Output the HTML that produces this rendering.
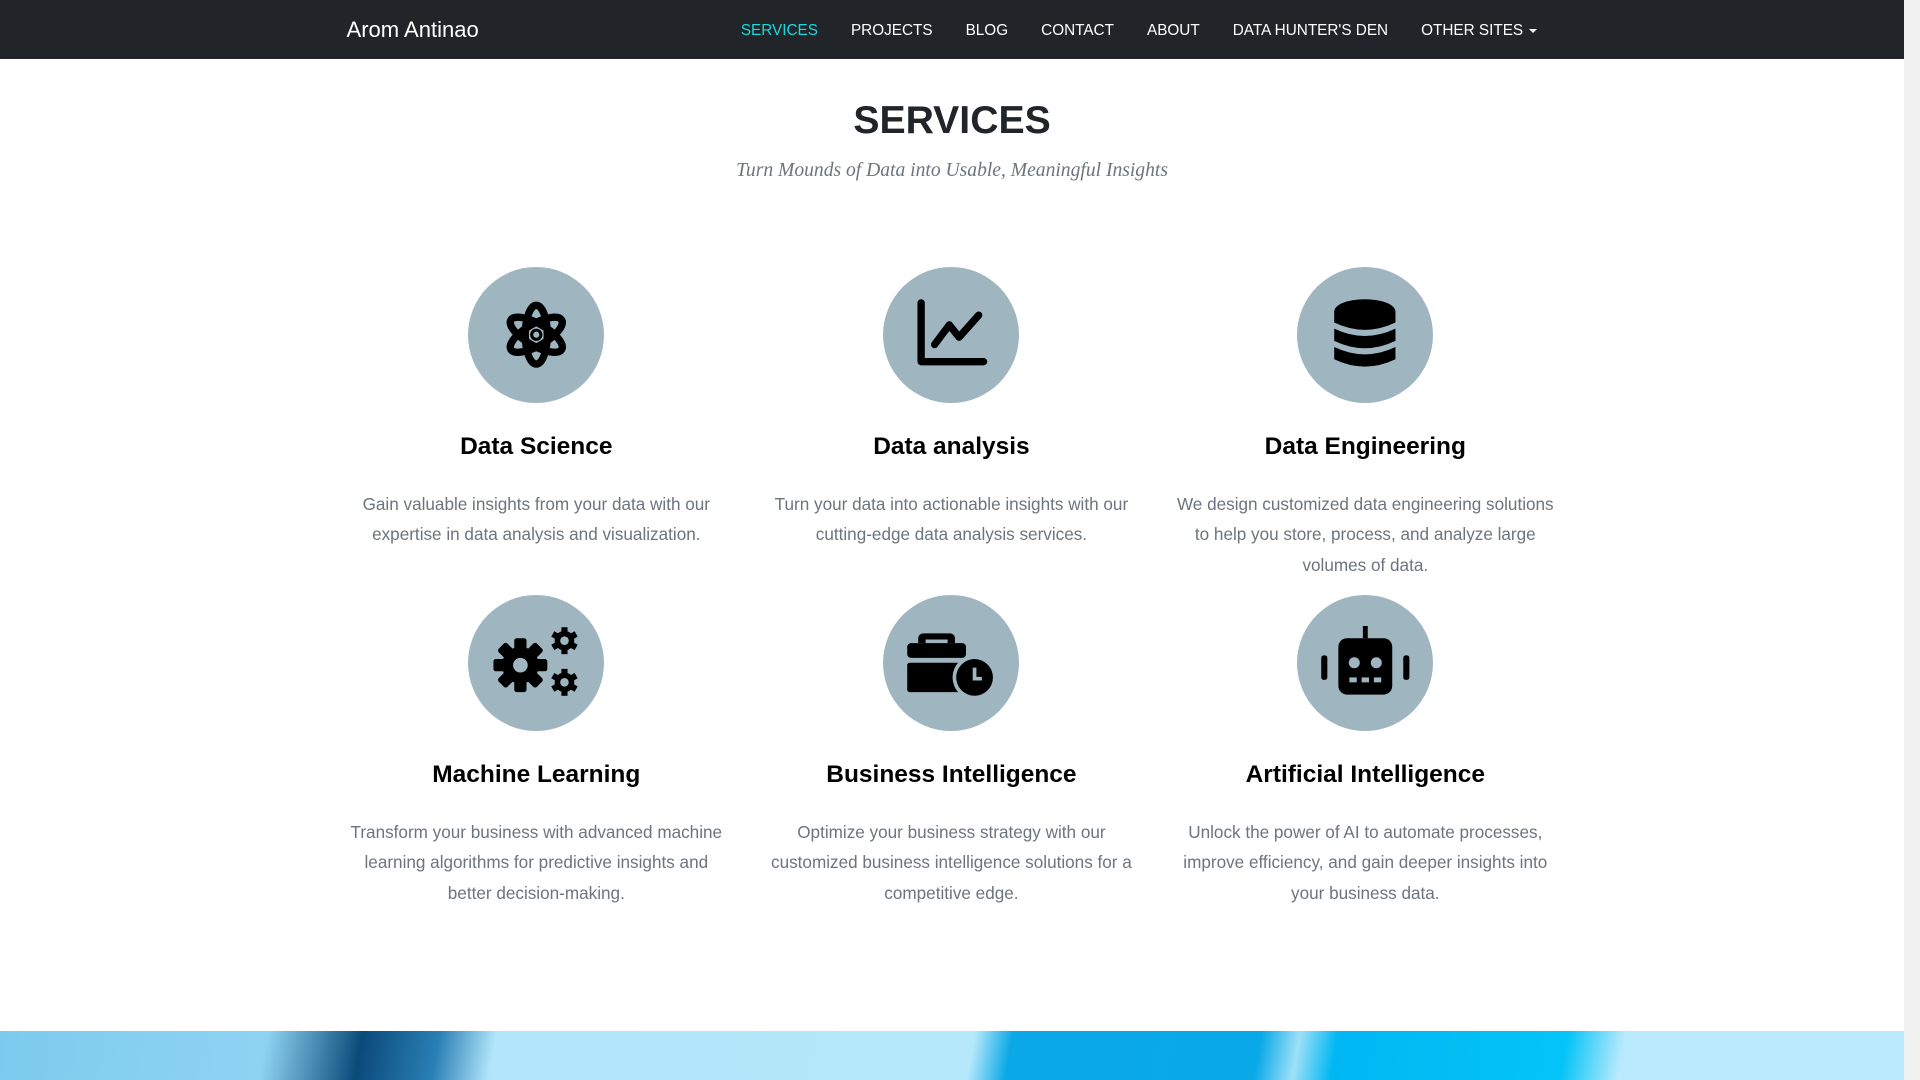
<!DOCTYPE html>
<html><head><meta charset="utf-8">
<style>
html,body{margin:0;padding:0;overflow:hidden}
body{width:1920px;height:1080px;position:relative;background:#fff}
#w{zoom:1.2244898;width:1568px;height:882px;position:relative;font-family:"Liberation Sans",sans-serif;overflow:hidden}
.nav{position:absolute;left:0;top:0;width:1555px;height:48px;background:#212529}
.brand{position:absolute;left:283px;top:14px;color:#fff;font-size:18px}
.links{position:absolute;top:18px;left:605px;font-size:12.5px;color:#fff;white-space:nowrap}
.links span{margin-right:27px}
.links .a{color:#1ad8dc}
.caret{display:inline-block;border-top:4px solid #fff;border-left:3.5px solid transparent;border-right:3.5px solid transparent;vertical-align:middle;margin-left:5px}
h1{position:absolute;left:0;width:1555px;top:81px;margin:0;text-align:center;font-size:32px;font-weight:bold;color:#212529}
.sub{position:absolute;left:0;width:1555px;top:131px;text-align:center;font-family:"Liberation Serif",serif;font-style:italic;font-size:16px;color:#6c757d}
.col{position:absolute;width:310px;text-align:center}
.circ{width:111px;height:111px;border-radius:50%;background:#9fb6c1;margin:0 auto;display:flex;align-items:center;justify-content:center}
.col h3{margin:22px 0 0;font-size:20px;font-weight:bold;color:#000;line-height:28px}
.col p{margin:20px 0 0;font-size:14px;line-height:25px;color:#6c757d}
.sb{position:absolute;left:1555px;top:0;width:13px;height:882px;background:#f1f1f1}
.th{position:absolute;left:1557px;top:145px;width:10px;height:123px;background:#c1c1c1}
.band{position:absolute;left:0;top:842px;width:1555px;height:40px;background:linear-gradient(100deg,#7ccbee 0%,#8fd3f2 14%,#0a4a7a 19%,#2a7fb5 23%,#b3e6fb 26%,#b6e8fb 51%,#0aa8e6 53%,#09a9e8 66%,#9ee0f8 68%,#00b7f3 70%,#04c4f7 82%,#b8e9fc 85%,#b8e9fc 100%)}
</style></head><body><div id="w">
<div class="nav"><div class="brand">Arom Antinao</div>
<div class="links"><span class="a">SERVICES</span><span>PROJECTS</span><span>BLOG</span><span>CONTACT</span><span>ABOUT</span><span>DATA HUNTER'S DEN</span><span>OTHER SITES<i class="caret"></i></span></div></div>
<h1>SERVICES</h1>
<div class="sub">Turn Mounds of Data into Usable, Meaningful Insights</div>

<div class="col" style="left:283px;top:218px"><div class="circ"><svg width="56" height="60" viewBox="-28 -30 56 60"><g fill="none" stroke="#000" stroke-width="6"><ellipse rx="9" ry="24"/><ellipse rx="9" ry="24" transform="rotate(60)"/><ellipse rx="9" ry="24" transform="rotate(-60)"/></g><circle r="5" fill="#000"/><circle r="2.5" fill="#9fb6c1"/></svg></div><h3>Data Science</h3><p>Gain valuable insights from your data with our expertise in data analysis and visualization.</p></div>

<div class="col" style="left:622px;top:218px"><div class="circ"><svg width="60" height="60" viewBox="0 0 60 60"><path d="M5 4V52H56" fill="none" stroke="#000" stroke-width="6" stroke-linecap="round" stroke-linejoin="round"/><path d="M16 38L28 22L36 32L52 14" fill="none" stroke="#000" stroke-width="6" stroke-linecap="round" stroke-linejoin="round"/></svg></div><h3>Data analysis</h3><p>Turn your data into actionable insights with our cutting-edge data analysis services.</p></div>

<div class="col" style="left:960px;top:218px"><div class="circ"><svg width="52" height="60" viewBox="0 0 52 60"><ellipse cx="26" cy="11" rx="25" ry="10"/><path d="M1 11H51V20Q26 32 1 20Z"/><path d="M1 25Q26 37 51 25V35Q26 47 1 35Z"/><path d="M1 40Q26 52 51 40V50Q26 62 1 50Z"/></svg></div><h3>Data Engineering</h3><p>We design customized data engineering solutions to help you store, process, and analyze large volumes of data.</p></div>

<div class="col" style="left:283px;top:486px"><div class="circ"><svg width="74" height="60" viewBox="0 0 74 60"><g transform="translate(24,32)"><circle r="15" fill="#000"/><g fill="#000"><rect x="-5" y="-22" width="10" height="44" rx="2"/><rect x="-5" y="-22" width="10" height="44" rx="2" transform="rotate(45)"/><rect x="-5" y="-22" width="10" height="44" rx="2" transform="rotate(90)"/><rect x="-5" y="-22" width="10" height="44" rx="2" transform="rotate(135)"/></g><circle r="6" fill="#9fb6c1"/></g><g transform="translate(60,12)"><circle r="8" fill="#000"/><g fill="#000"><rect x="-2.5" y="-11" width="5" height="22"/><rect x="-2.5" y="-11" width="5" height="22" transform="rotate(60)"/><rect x="-2.5" y="-11" width="5" height="22" transform="rotate(120)"/></g><circle r="3.5" fill="#9fb6c1"/></g><g transform="translate(60,46)"><circle r="8" fill="#000"/><g fill="#000"><rect x="-2.5" y="-11" width="5" height="22"/><rect x="-2.5" y="-11" width="5" height="22" transform="rotate(60)"/><rect x="-2.5" y="-11" width="5" height="22" transform="rotate(120)"/></g><circle r="3.5" fill="#9fb6c1"/></g></svg></div><h3>Machine Learning</h3><p>Transform your business with advanced machine learning algorithms for predictive insights and better decision-making.</p></div>

<div class="col" style="left:622px;top:486px"><div class="circ"><svg width="74" height="60" viewBox="0 0 74 60"><path d="M14 6h22a4 4 0 0 1 4 4v4h-6v-3h-18v3h-6v-4a4 4 0 0 1 4-4z"/><rect x="1" y="14" width="48" height="12" rx="3"/><rect x="1" y="30" width="48" height="24" rx="2"/><circle cx="56" cy="42" r="18" fill="#9fb6c1"/><circle cx="56" cy="42" r="15"/><path d="M56 34v9h6" fill="none" stroke="#9fb6c1" stroke-width="3"/></svg></div><h3>Business Intelligence</h3><p>Optimize your business strategy with our customized business intelligence solutions for a competitive edge.</p></div>

<div class="col" style="left:960px;top:486px"><div class="circ"><svg width="74" height="60" viewBox="0 0 74 60"><rect x="35" y="0" width="4" height="10"/><rect x="15" y="10" width="44" height="46" rx="7"/><rect x="1" y="24" width="5" height="20" rx="2"/><rect x="68" y="24" width="5" height="20" rx="2"/><circle cx="28" cy="30" r="4.5" fill="#9fb6c1"/><circle cx="46" cy="30" r="4.5" fill="#9fb6c1"/><g fill="#9fb6c1"><rect x="24" y="42" width="6" height="4"/><rect x="34" y="42" width="6" height="4"/><rect x="44" y="42" width="6" height="4"/></g></svg></div><h3>Artificial Intelligence</h3><p>Unlock the power of AI to automate processes, improve efficiency, and gain deeper insights into your business data.</p></div>

<div class="band"></div>
<div class="sb"><div class="th"></div></div>
</div></body></html>
